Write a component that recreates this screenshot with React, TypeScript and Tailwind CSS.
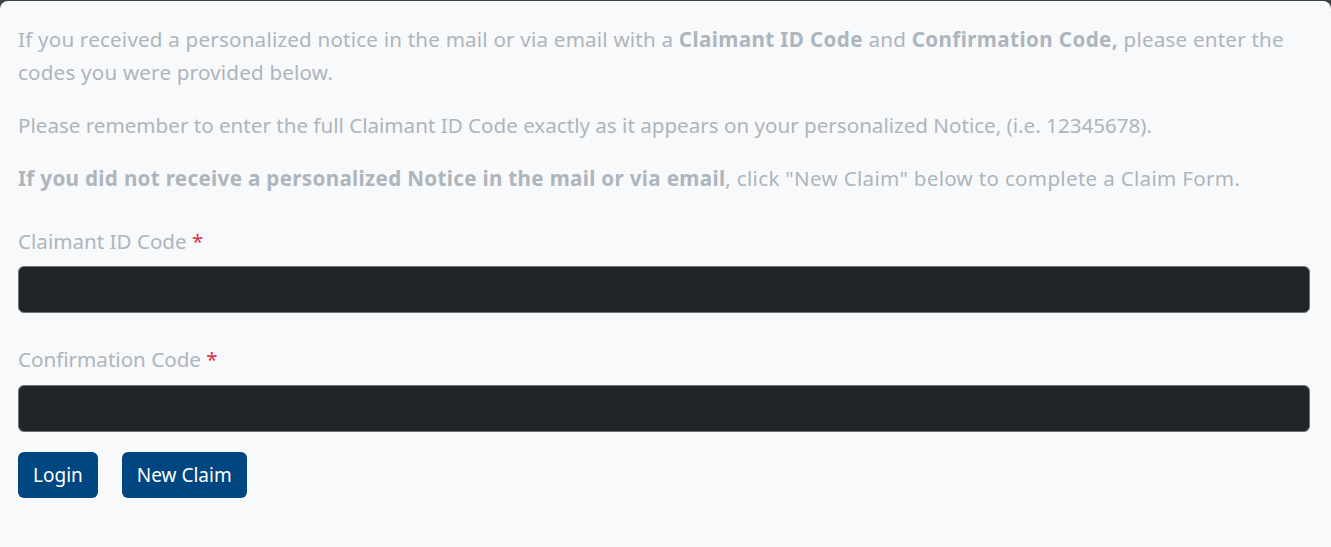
import React from "react";

export default function App() {
  return (
    <div className="min-h-[547px] bg-[#3a4046] pt-px" style={{ fontFamily: '"Noto Sans", sans-serif' }}>
      <div className="min-h-[546px] rounded-t-[8px] bg-[#f8f9fa] pl-[18px] pr-[21px] pt-[22px] text-[20.6px] leading-[33px] text-[#adb5bd]">
        <p className="mb-[20px] tracking-[0.2px]">
          If you received a personalized notice in the mail or via email with a{" "}
          <b className="tracking-[0.4px]">Claimant ID Code</b> and{" "}
          <b className="tracking-[0.4px]">Confirmation Code,</b> please enter the codes you were provided below.
        </p>
        <p className="mb-[20px]">
          Please remember to enter the full Claimant ID Code exactly as it appears on your personalized Notice, (i.e. 12345678).
        </p>
        <p className="mb-[30px] tracking-[0.3px]">
          <b className="tracking-[0.33px]">If you did not receive a personalized Notice in the mail or via email</b>, click "New Claim" below to
          complete a Claim Form.
        </p>
        <div>
          <label className="block">
            Claimant ID Code <span className="text-[#dc3545]">*</span>
          </label>
          <input className="mt-[8px] block h-[47px] w-full rounded-[6px] border border-[#6c757d] bg-[#212529]" />
        </div>
        <div className="mt-[30px]">
          <label className="block">
            Confirmation Code <span className="text-[#dc3545]">*</span>
          </label>
          <input className="mt-[9px] block h-[47px] w-full rounded-[6px] border border-[#6c757d] bg-[#212529]" />
        </div>
        <div className="mt-[20px] flex gap-[24px]">
          <button className="h-[46px] rounded-[6px] bg-[#004680] px-[15px] text-[19px] text-white">Login</button>
          <button className="h-[46px] rounded-[6px] bg-[#004680] px-[15px] text-[19px] text-white">New Claim</button>
        </div>
      </div>
    </div>
  );
}
